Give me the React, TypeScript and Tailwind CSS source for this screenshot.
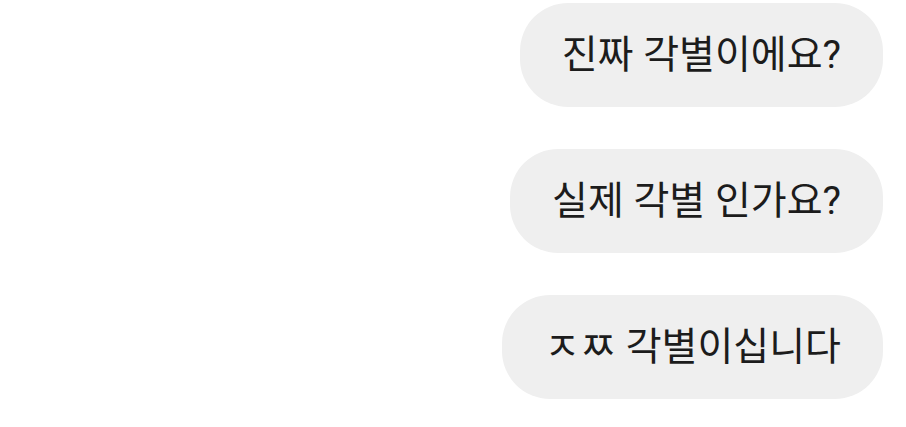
const messages = ["진짜 각별이에요?", "실제 각별 인가요?", "ㅈㅉ 각별이십니다"];

export default function App() {
  return (
    <div className="flex h-[427px] w-[906px] flex-col items-end gap-[42px] bg-white pr-[23px] pt-[3px] font-['Roboto','Noto_Sans_CJK_KR',sans-serif]">
      {messages.map((text) => (
        <div
          key={text}
          className="flex h-[104px] items-center rounded-[48px] bg-[#efefef] px-[42px] text-[39px] leading-none text-[#1c1c1c]"
        >
          {text}
        </div>
      ))}
    </div>
  );
}
